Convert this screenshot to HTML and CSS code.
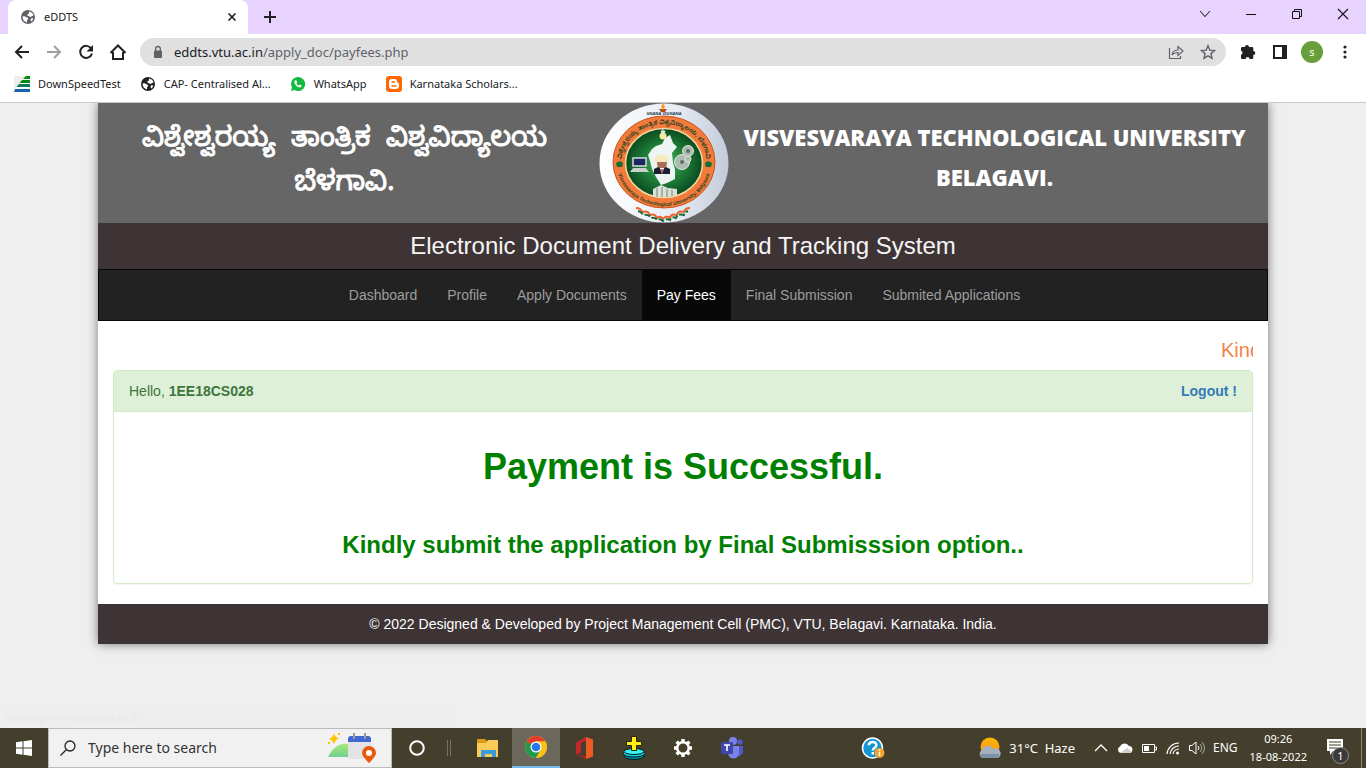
FILE: index.html
```html
<!DOCTYPE html>
<html lang="en">
<head>
<meta charset="utf-8">
<title>eDDTS</title>
<link rel="stylesheet" href="styles.css">
</head>
<body>
<svg class="defs" width="0" height="0" aria-hidden="true">
  <symbol id="globe" viewBox="0 0 16 16"><circle cx="8" cy="8" r="7" fill="currentColor"/><path d="M9 2.600c2.300.3 3.900 1.800 4.500 3.600-.7.900-1.700.6-2.300 1.300-.5.700-1.700.4-2.100-.3-.5-.8-1.900-.2-1.900-1.300 0-1 1.600-.8 1.900-1.700.2-.600-.4-1-.1-1.600z" fill="#fff"/><path d="M2.600 7.600c1.200-.5 2.800-.2 3.600.5.700.7 1.900.5 2 1.500.1.900-1 1.200-1.200 2-.100.600.3 1.200-.2 1.800C4.300 12.900 2.500 10.700 2.600 7.600z" fill="#fff"/><path d="M11.300 9.200l1.900.200c-.2 1.300-1 2.300-2 3-.6-.8-.9-2.400.1-3.200z" fill="#fff"/></symbol>
</svg>

<header class="browser">
  <div class="tabstrip">
    <div class="tab">
      <svg class="i16 muted"><use href="#globe"/></svg>
      <span class="tab-title">eDDTS</span>
      <button class="icon-btn" aria-label="Close tab"><svg class="i16" viewBox="0 0 16 16"><path d="M4.500 4.500l7 7M11.500 4.500l-7 7" stroke="#202124" stroke-width="1.700"/></svg></button>
    </div>
    <button class="icon-btn new-tab" aria-label="New tab"><svg class="i16" viewBox="0 0 16 16"><path d="M8 2v12M2 8h12" stroke="#202124" stroke-width="2"/></svg></button>
    <div class="window-controls">
      <button class="icon-btn" aria-label="Search tabs"><svg class="i16" viewBox="0 0 16 16"><path d="M3 5l5 5.500L13 5" fill="none" stroke="#333" stroke-width="1.100"/></svg></button>
      <button class="icon-btn" aria-label="Minimize"><svg class="i16" viewBox="0 0 16 16"><path d="M3 8.500h10" stroke="#111"/></svg></button>
      <button class="icon-btn" aria-label="Restore"><svg class="i16" viewBox="0 0 16 16"><path d="M3.500 5.500h7v7h-7zM5.500 5.500v-2h7v7h-2" fill="none" stroke="#111"/></svg></button>
      <button class="icon-btn" aria-label="Close"><svg class="i16" viewBox="0 0 16 16"><path d="M3 3l10 10M13 3L3 13" stroke="#111" stroke-width="1.100"/></svg></button>
    </div>
  </div>

  <div class="toolbar">
    <div class="nav-buttons">
      <button class="icon-btn" aria-label="Back"><svg class="i16" viewBox="0 0 16 16"><path d="M15 8H2.500M8 2L2 8l6 6" fill="none" stroke="#202124" stroke-width="2"/></svg></button>
      <button class="icon-btn" aria-label="Forward"><svg class="i16" viewBox="0 0 16 16"><path d="M1 8h12.500M8 2l6 6-6 6" fill="none" stroke="#a0a0a0" stroke-width="2"/></svg></button>
      <button class="icon-btn" aria-label="Reload"><svg class="i16" viewBox="0 0 16 16"><path d="M13.200 4.500A6 6 0 1 0 14 9.500" fill="none" stroke="#202124" stroke-width="2"/><path d="M15 1v6.500H8.500z" fill="#202124"/></svg></button>
      <button class="icon-btn" aria-label="Home"><svg class="i16" viewBox="0 0 16 16"><path d="M3 8v7h10V8M.5 9L8 1.500 15.500 9" fill="none" stroke="#202124" stroke-width="2"/></svg></button>
    </div>
    <div class="omnibox">
      <svg class="i16" viewBox="0 0 16 16"><rect x="4" y="6.500" width="8" height="7.500" rx="1" fill="#5f6368"/><path d="M5.700 7V4.800a2.300 2.300 0 0 1 4.600 0V7" fill="none" stroke="#5f6368" stroke-width="1.300"/></svg>
      <a class="url" href="#">eddts.vtu.ac.in<span class="url-path">/apply_doc/payfees.php</span></a>
      <button class="icon-btn" aria-label="Share"><svg class="i16" viewBox="0 0 16 16"><path d="M1.500 4v10.500h11V12M4 11c.5-3.500 2.500-5 6-5V2.500l5 4.500-5 4.500V8.500C7.500 8.500 5.500 9 4 11z" fill="none" stroke="#5f6368" stroke-width="1.200"/></svg></button>
      <button class="icon-btn" aria-label="Bookmark this tab"><svg class="i16" viewBox="0 0 16 16"><path d="M8 1.800l1.800 4.300 4.700.4-3.600 3.100 1.100 4.600L8 11.800l-4 2.400 1.100-4.600-3.600-3.100 4.700-.4z" fill="none" stroke="#5f6368" stroke-width="1.400"/></svg></button>
    </div>
    <div class="toolbar-right">
      <button class="icon-btn" aria-label="Extensions"><svg class="i16" viewBox="0 0 16 16"><path d="M5 3a2 2 0 0 1 4 0h3q1.300 0 1.300 1.300V7a2 2 0 0 1 0 4v2.700Q13.300 15 12 15H9.500a1.900 1.900 0 0 0-3.800 0H2.300Q1 15 1 13.700v-3a2 2 0 0 0 0-3.900V4.300Q1 3 2.300 3z" fill="#202124"/></svg></button>
      <button class="icon-btn" aria-label="Side panel"><svg class="i16" viewBox="0 0 16 16"><path d="M1 1h14v14H1zM3 3v10h7V3z" fill="#202124" fill-rule="evenodd"/></svg></button>
      <button class="avatar" aria-label="Profile">s</button>
      <button class="icon-btn" aria-label="Menu"><svg class="i16" viewBox="0 0 16 16" fill="#202124"><circle cx="8" cy="3" r="1.600"/><circle cx="8" cy="8" r="1.600"/><circle cx="8" cy="13" r="1.600"/></svg></button>
    </div>
  </div>

  <nav class="bookmarks" aria-label="Bookmarks">
    <a href="#"><svg class="i16" viewBox="0 0 16 16"><path d="M0 0h13L0 14z" fill="#eee"/><path d="M12 0h4v3H9z M8 4h8v3H5.500z" fill="#078a12"/><path d="M5 8h11v3H2.500z" fill="#147957"/><path d="M1 13h15v3H0z" fill="#1765ad"/></svg>DownSpeedTest</a>
    <a href="#"><svg class="i16"><use href="#globe"/></svg>CAP- Centralised Al...</a>
    <a href="#"><svg class="i16" viewBox="0 0 16 16"><path d="M8 1a7 7 0 1 1-3.300 13.100L1 15l1-3.500A7 7 0 0 1 8 1z" fill="#12b93f"/><path d="M5.300 4.300l1.200.1.700 1.900-.8 1c.6 1.200 1.300 1.800 2.400 2.300l.9-1 1.900.9c0 1.400-1 2.100-2.200 1.900-2.600-.5-4.700-2.700-5.100-4.800-.1-1 .3-1.900 1-2.300z" fill="#fff"/></svg>WhatsApp</a>
    <a href="#"><svg class="i16" viewBox="0 0 16 16"><rect width="16" height="16" rx="3" fill="#f60"/><path d="M6 3h2.500a2.500 2.500 0 0 1 2.500 2.500c0 1 .4 1.200 1.200 1.300.6.100.8.300.8.900V10a3 3 0 0 1-3 3H6a3 3 0 0 1-3-3V6a3 3 0 0 1 3-3z" fill="#fff"/><path d="M6 6h2.300M6 10h4" stroke="#f60" stroke-width="1.400" stroke-linecap="round"/></svg>Karnataka Scholars...</a>
  </nav>
</header>

<main class="viewport">
  <div class="site">
    <div class="banner">
      <p class="title-kn" lang="kn">ವಿಶ್ವೇಶ್ವರಯ್ಯ&nbsp; ತಾಂತ್ರಿಕ&nbsp; ವಿಶ್ವವಿದ್ಯಾಲಯ<br>ಬೆಳಗಾವಿ.</p>
      <svg class="seal" viewBox="0 0 130 120" role="img" aria-label="University seal">
        <defs>
          <radialGradient id="sealGreen"><stop offset="0" stop-color="#4db866"/><stop offset=".55" stop-color="#1f7d38"/><stop offset="1" stop-color="#0a4b20"/></radialGradient>
          <linearGradient id="sealRim" x2="1"><stop offset="0" stop-color="#fff"/><stop offset=".6" stop-color="#e6ebf4"/><stop offset="1" stop-color="#c3cbd9"/></linearGradient>
          <path id="arcTop" d="M22.500 59A42.500 38 0 0 1 107.500 59"/>
          <path id="arcBottom" d="M18 61A47 42 0 0 0 112 61"/>
        </defs>
        <ellipse cx="65" cy="60" rx="64.500" ry="59.500" fill="url(#sealRim)"/>
        <ellipse cx="65" cy="59" rx="51" ry="46" fill="#f27a3a" stroke="#c95721"/>
        <ellipse cx="65" cy="60" rx="38.500" ry="34.500" fill="url(#sealGreen)" stroke="#f3d9a4" stroke-width="1.500"/>
        <text class="seal-kn" lang="kn"><textPath href="#arcTop" startOffset="50%" text-anchor="middle">ವಿಶ್ವೇಶ್ವರಯ್ಯ ತಾಂತ್ರಿಕ ವಿಶ್ವವಿದ್ಯಾಲಯ, ಬೆಳಗಾವಿ</textPath></text>
        <text class="seal-en"><textPath href="#arcBottom" startOffset="50%" text-anchor="middle">Visvesvaraya Technological University, Belgaum</textPath></text>
        <path d="M17 60l4-2 3 2-1 4h-5zM106 60l3-2 4 2-1 4h-5z" fill="#0c7130"/>
        <path d="M60 6h8l-2 3h-4z" fill="#ad4b23"/><path d="M64 0l2 4-2 3-2-3z" fill="#ff9b20"/>
        <text class="seal-motto" x="65" y="12" text-anchor="middle">GNANA VIGNANA</text>
        <path d="M71 32l3 8 4 4-5 6 1 10 2 6v10l-8 4-6 2-5-8-4-8-2-8-2-6 4-6 4-3 6-2 3-6z" fill="#edf5f2"/>
        <circle cx="64" cy="33" r="3.500" fill="#f8e99a"/><path d="M62 28h4l-1 3h-2zM64 25v4" stroke="#ddd" fill="#e8f0b0"/>
        <ellipse cx="63" cy="60" rx="5" ry="7" fill="#a96e58"/><path d="M55 58c0-8 15-8 15-1l-3 2h-9z" fill="#f7e9bf"/><path d="M55 71v-5l4-2 4 3 4-3 4 2v5z" fill="#182033"/><path d="M61 65h4l-2 6z" fill="#fff"/><path d="M63 66v4" stroke="#d02c24" stroke-width="1.500"/>
        <path d="M34 55h13v8H34z" fill="#192763" stroke="#d8dce2" stroke-width="1.500"/><path d="M34 65h13l3 4H31z" fill="#c9d2cf"/>
        <g fill="#adbbb1" stroke="#e0e5dd"><circle cx="83" cy="59" r="7.500"/><circle cx="89" cy="48" r="5.500"/><circle cx="89" cy="56" r="3"/></g><circle cx="83" cy="59" r="2" fill="#58735f"/><circle cx="89" cy="48" r="2" fill="#58735f"/>
        <path d="M54 94v-8l8-4 7 3 9 1v6l-9 2z" fill="#dce1d8"/><path d="M58 85v9M63 84v10M68 86v8M73 87v6" stroke="#718779"/>
        <g fill="none" stroke-width="2">
          <path d="M37 105q5 0 6 4 6-2 8 3 5-2 7 3 3-3 6 1 3-4 7-1 1-5 7-3 1-5 7-3 1-4 6-4" stroke="#e9622f"/>
          <path d="M39 108q4 1 5 4 6-1 8 3 4-1 6 2 3-2 6 1 4-3 7-1 2-4 6-2 2-5 8-3 1-3 4-4" stroke="#176d38" stroke-dasharray="6 2"/>
        </g>
      </svg>
      <p class="title-en">VISVESVARAYA TECHNOLOGICAL UNIVERSITY<br>BELAGAVI.</p>
    </div>
    <h1 class="system-title">Electronic Document Delivery and Tracking System</h1>
    <nav class="site-nav" aria-label="Main">
      <a href="#">Dashboard</a>
      <a href="#">Profile</a>
      <a href="#">Apply Documents</a>
      <a href="#" class="active" aria-current="page">Pay Fees</a>
      <a href="#">Final Submission</a>
      <a href="#">Submited Applications</a>
    </nav>
    <div class="content">
      <div class="ticker">Kind</div>
      <section class="panel">
        <div class="panel-heading">
          <span>Hello, <b>1EE18CS028</b></span>
          <a href="#">Logout !</a>
        </div>
        <div class="panel-body">
          <h2>Payment is Successful.</h2>
          <h3>Kindly submit the application by Final Submisssion option..</h3>
        </div>
      </section>
    </div>
    <footer class="site-footer">© 2022 Designed &amp; Developed by Project Management Cell (PMC), VTU, Belagavi. Karnataka. India.</footer>
  </div>
  <div class="status-bubble">Waiting for eddts.vtu.ac.in...</div>
</main>

<footer class="taskbar">
  <button class="task start" aria-label="Start"><svg class="i16" viewBox="0 0 16 16"><path d="M0 2.300l6.500-1v6.200H0zM7.500 1.200L16 0v7.500H7.500zM0 8.500h6.500v6.200L0 13.800zM7.500 8.500H16V16l-8.500-1.200z" fill="#fff"/></svg></button>
  <label class="search">
    <svg class="i16" viewBox="0 0 16 16"><circle cx="10" cy="6" r="5" fill="none" stroke="#222" stroke-width="1.300"/><path d="M6.500 9.500L.5 15.500" stroke="#222" stroke-width="1.300"/></svg>
    <input type="text" placeholder="Type here to search" aria-label="Search">
    <svg class="search-art" viewBox="0 0 50 32"><defs><linearGradient id="hill" y2="1" x2="0"><stop stop-color="#a7e878"/><stop offset="1" stop-color="#73cf91"/></linearGradient></defs><path d="M1 25c5-11 15-17 25-11v11z" fill="url(#hill)"/><rect x="21" y="6" width="23" height="21" rx="3" fill="#e2e3e5"/><path d="M21 10V7q0-3 3-3h17q3 0 3 3v3z" fill="#4168d5"/><path d="M27 1v6M38 1v6" stroke="#999" stroke-width="2"/><path d="M7 2l2 3 3 1.500-3 1.500-2 4-2-3.500L2 7l3-2z" fill="#ffc400"/><path d="M11 1h2v2h-2zM1 10h2v2H1z" fill="#ffc400"/><path d="M42 31s-7-6.500-7-10a7 7 0 0 1 14 0c0 3.500-7 10-7 10z" fill="#e8590c"/><circle cx="42" cy="21" r="3" fill="#fff"/></svg>
  </label>
  <button class="task" aria-label="Cortana"><svg class="i16" viewBox="0 0 16 16"><circle cx="8" cy="8" r="6.800" fill="none" stroke="#fff" stroke-width="2"/></svg></button>
  <span class="divider"></span>
  <button class="task" aria-label="File Explorer"><svg class="i24" viewBox="0 0 24 24"><path d="M1 4q0-1 1-1h7l2 2h11v16H1z" fill="#d99a16"/><path d="M1 7h9l2-3h10v17H1z" fill="#fbcb5a"/><path d="M5 21v-7h15v7h-4v-3H9v3z" fill="#3b9bd9"/></svg></button>
  <button class="task active" aria-label="Chrome"><svg class="i24" viewBox="0 0 24 24"><circle cx="12" cy="12" r="11" fill="#fbc116"/><path d="M12 12L2.500 6.500A11 11 0 0 1 21.500 6.500H12z" fill="#e33b2e"/><path d="M2.500 6.500A11 11 0 0 0 12 23l4.800-8.200L12 12z" fill="#229a4b"/><path d="M12 6.500h9.500A11 11 0 0 1 12 23l4.800-8.200z" fill="#fbc116"/><circle cx="12" cy="12" r="5.500" fill="#fff"/><circle cx="12" cy="12" r="4.300" fill="#2878e8"/></svg></button>
  <button class="task" aria-label="Office"><svg class="i24" viewBox="0 0 24 24"><path d="M3 6.500L13 1v4L8 7v9.500L3 18.500z" fill="#c3272b"/><path d="M13 1l7 2.500v17L13 23z" fill="#ee5a24"/><path d="M3 18.500l10 1.500v3z" fill="#b3202a"/></svg></button>
  <button class="task" aria-label="Downloader"><svg class="i24" viewBox="0 0 24 24"><ellipse cx="12" cy="20" rx="10" ry="3.500" fill="#078d9a" stroke="#001b22"/><ellipse cx="12" cy="17.500" rx="11" ry="3.500" fill="#15d6df" stroke="#001b22"/><ellipse cx="12" cy="15.500" rx="10" ry="3" fill="#3bf2f3" stroke="#001b22"/><path d="M9.500.5h5v5h5v4h-5v5h-5v-5h-5v-4h5z" fill="#ffed16" stroke="#2b2500"/></svg></button>
  <button class="task" aria-label="Settings"><svg class="i24" viewBox="0 0 24 24"><circle cx="12" cy="12" r="5.800" fill="none" stroke="#fff" stroke-width="2.600"/><path d="M12 3v3M12 18v3M3 12h3M18 12h3M5.600 5.600l2.200 2.200M16.200 16.200l2.200 2.200M18.400 5.600l-2.200 2.200M7.800 16.200l-2.200 2.200" stroke="#fff" stroke-width="3.400"/></svg></button>
  <button class="task" aria-label="Teams"><svg class="i24" viewBox="0 0 24 24"><circle cx="13" cy="5" r="4" fill="#7b83eb"/><circle cx="20" cy="6" r="2.800" fill="#5059c9"/><path d="M15 10h8v6a5 5 0 0 1-6 4z" fill="#5059c9"/><path d="M8 10h11v7a5.500 5.500 0 0 1-11 0z" fill="#7b83eb"/><rect x="1" y="6" width="12" height="12" rx="1" fill="#4047ac"/><path d="M4 9h6M7 9v6" stroke="#fff" stroke-width="1.600"/></svg></button>
  <button class="task help" aria-label="Get help"><svg class="i24" viewBox="0 0 24 24"><circle cx="11.500" cy="12" r="10" fill="#1296d5" stroke="#fff" stroke-width="1.500"/><path d="M7.800 9.300c.2-4.500 7.600-4.300 7.600-.3 0 2.800-3.600 2.500-3.600 5.500M11.800 16v2.500" fill="none" stroke="#fff" stroke-width="2.500"/><circle cx="18.500" cy="17" r="5" fill="#f4a426"/><path d="M18.500 16v4M18.500 13.500v1.500" stroke="#fff" stroke-width="1.500"/></svg></button>
  <div class="tray">
    <svg class="i24" viewBox="0 0 24 24"><defs><linearGradient id="sun" x2="0" y2="1"><stop stop-color="#ffb900"/><stop offset="1" stop-color="#f78b1f"/></linearGradient></defs><circle cx="13" cy="11" r="9.500" fill="url(#sun)"/><path d="M5 22a4.500 4.500 0 0 1 0-8 6 6 0 0 1 11-1 5 5 0 0 1 5 9z" fill="#a4b0bd"/><path d="M3 18h19v2q-1 2-3 2H5q-2-1-2-4z" fill="#7c91a8"/></svg>
    <span class="weather">31°C&nbsp; Haze</span>
    <svg class="i16" viewBox="0 0 16 16"><path d="M2 11l6-6 6 6" fill="none" stroke="#fff" stroke-width="1.400"/></svg>
    <svg class="i16" viewBox="0 0 16 16"><path d="M3.500 13a3.500 3.500 0 0 1-.5-6.500A5 5 0 0 1 12 6a3.600 3.600 0 0 1 1 7z" fill="#fff"/><path d="M3 13l7-5 5 4-2 1z" fill="#cfcfc9"/></svg>
    <svg class="i16" viewBox="0 0 16 16"><path d="M1.500 4.500h12v8h-12zM14 7h1.500v3H14" fill="none" stroke="#fff"/><path d="M3 6h5v5H3z" fill="#fff"/></svg>
    <svg class="i16" viewBox="0 0 16 16"><g fill="none" stroke="#fff" stroke-width="1.200"><path d="M2 14A12 12 0 0 1 14 3M5 14a9 9 0 0 1 9-8M8 14a6 6 0 0 1 6-5"/></g><circle cx="12.500" cy="13" r="1.500" fill="#fff"/></svg>
    <svg class="i16" viewBox="0 0 16 16"><path d="M.5 5.500H3l4-3.500v12L3 10.500H.5zM9 6q2 2 0 4" fill="none" stroke="#fff"/><path d="M11 4q3.500 4 0 8M13 2q5 6 0 12" fill="none" stroke="#aaa89c"/></svg>
    <span class="lang">ENG</span>
    <time class="clock">09:26<br>18-08-2022</time>
    <button class="task notify" aria-label="1 notification"><svg class="i24" viewBox="0 0 24 24"><path d="M1 3h16v12H7l-3 4v-4H1z" fill="#fff"/><path d="M3 6h12M3 9h12M3 12h8" stroke="#443e2c" stroke-width="1.200"/></svg><span class="badge">1</span></button>
  </div>
</footer>
</body>
</html>
```
FILE: styles.css
```css
* { box-sizing: border-box; }
body {
  margin: 0;
  height: 100vh;
  display: flex;
  flex-direction: column;
  overflow: hidden;
  font-family: "Liberation Sans", Arial, sans-serif;
  font-size: 14px;
  line-height: 20px;
}
a { text-decoration: none; color: inherit; }
p, h1, h2, h3 { margin: 0; }
button { border: 0; padding: 0; background: none; font: inherit; color: inherit; }
svg { display: block; flex: none; }
.defs { position: absolute; }
.i16 { width: 16px; height: 16px; }
.i24 { width: 24px; height: 24px; }
.icon-btn { flex: none; width: 16px; height: 16px; }
.muted { color: #5f6368; }

/* Browser window */
.browser {
  flex: none;
  background: #fff;
  border-bottom: 1px solid #c8c8c8;
  color: #202124;
  font-family: "Noto Sans", "Open Sans", sans-serif;
  font-size: 11px;
}
.tabstrip {
  display: flex;
  align-items: center;
  height: 34px;
  padding-left: 8px;
  background: #e8d3ff;
}
.tab {
  display: flex;
  align-items: center;
  gap: 8px;
  width: 240px;
  height: 34px;
  padding: 0 8px 0 12px;
  border-radius: 8px 8px 0 0;
  background: #fff;
}
.tab-title { flex: 1; }
.new-tab { margin-left: 14px; }
.window-controls { display: flex; gap: 30px; margin-left: auto; padding: 0 15px 6px 0; }
.toolbar {
  display: flex;
  align-items: center;
  height: 36px;
  gap: 14px;
  padding: 0 13px 0 14px;
}
.nav-buttons { display: flex; gap: 16px; }
.omnibox {
  flex: 1;
  display: flex;
  align-items: center;
  gap: 16px;
  height: 28px;
  padding: 0 10px;
  border-radius: 14px;
  background: #e0e0e0;
}
.url { flex: 1; margin-left: -8px; font-size: 13px; }
.url-path { color: #5f6368; }
.toolbar-right { display: flex; align-items: center; gap: 16px; }
.toolbar-right .icon-btn:last-child { margin-left: -2px; }
.avatar {
  width: 22px;
  height: 22px;
  margin-left: -3px;
  border-radius: 50%;
  background: #689f38;
  color: #fff;
  line-height: 20px;
}
.bookmarks {
  display: flex;
  align-items: center;
  gap: 19px;
  height: 32px;
  padding: 0 14px 4px;
}
.bookmarks a { display: flex; align-items: center; gap: 8px; }

/* Site */
.viewport { position: relative; flex: 1; min-height: 0; overflow: hidden; background: #efefef; }
.site {
  max-width: 1170px;
  margin: 0 auto;
  background: #fff;
  box-shadow: 0 0 10px #777;
}
.banner {
  display: grid;
  grid-template-columns: 501fr 130px 539fr;
  height: 120px;
  background: #666;
  color: #fff;
  text-align: center;
  white-space: nowrap;
}
.title-kn {
  padding: 18px 8px 0 0;
  font-family: "Noto Sans Kannada", "Noto Sans", sans-serif;
  font-size: 27px;
  line-height: 44px;
  -webkit-text-stroke: 1px #fff;
}
.title-en { padding: 14px 8px 0 0; font-family: "Open Sans", sans-serif; font-size: 22px; line-height: 40px; font-weight: 800; }
.seal { width: 130px; height: 120px; }
.seal-kn { font-family: "Noto Sans Kannada", sans-serif; font-size: 6px; font-weight: 700; fill: #354523; }
.seal-en { font-family: "Noto Sans", sans-serif; font-size: 5px; font-weight: 700; fill: #354523; }
.seal-motto { font-family: "Noto Sans", sans-serif; font-size: 4px; font-weight: 700; fill: #223c4b; }
.system-title {
  padding: 10px 0;
  background: #3e3435;
  color: #f5f5f5;
  font-size: 24px;
  line-height: 26px;
  font-weight: 400;
  text-align: center;
}
.site-nav {
  display: flex;
  justify-content: center;
  padding-left: 3px;
  border: 1px solid #080808;
  background: #222;
  color: #9d9d9d;
}
.site-nav a { padding: 15px; }
.site-nav .active { background: #080808; color: #fff; }
.content { padding: 15px 15px 20px; }
.ticker {
  padding: 0 0 6px calc(100% - 32px);
  overflow: hidden;
  color: #f0834a;
  font-size: 20px;
  line-height: 28px;
}
.panel {
  border: 1px solid #d6e9c6;
  border-radius: 4px;
  box-shadow: 0 1px 1px rgba(0, 0, 0, .05);
}
.panel-heading {
  display: flex;
  justify-content: space-between;
  padding: 10px 15px;
  border-bottom: 1px solid #d6e9c6;
  background: #dff0d8;
  color: #3c763d;
}
.panel-heading a { color: #337ab7; font-weight: 700; }
.panel-body { padding: 35px 15px 25px; color: #008000; text-align: center; }
.panel-body h2 { font-size: 36px; line-height: 40px; }
.panel-body h3 { margin-top: 45px; font-size: 24px; line-height: 26px; }
.site-footer { padding: 10px; background: #3e3435; color: #fff; text-align: center; }
.status-bubble {
  position: absolute;
  left: 0;
  bottom: 0;
  width: 33%;
  padding: 0 6px;
  background: #eee;
  color: #e9e9e9;
  font-family: "Noto Sans", sans-serif;
  font-size: 11px;
}

/* Windows taskbar */
.taskbar {
  flex: none;
  display: flex;
  align-items: center;
  height: 40px;
  background: #443e2c;
  color: #fff;
  font-family: "Noto Sans", "Open Sans", sans-serif;
}
.task { flex: none; display: grid; place-items: center; width: 49px; height: 40px; }
.task.start { width: 48px; }
.task.active { width: 48px; background: #6b685b; border-bottom: 2px solid #76b9ed; }
.divider { width: 4px; height: 16px; margin: 0 12px 0 6px; border: solid #77725f; border-width: 0 1px; }
.search {
  display: flex;
  align-items: center;
  gap: 12px;
  width: 344px;
  height: 40px;
  padding: 0 14px 0 11px;
  border: 1px solid #bbb;
  background: #f1f1f1;
}
.search input { flex: 1; min-width: 0; padding: 0; border: 0; background: none; color: #333; font: inherit; }
.search input::placeholder { color: #333; opacity: 1; }
.search-art { width: 50px; height: 32px; }
.help { margin-left: 92px; }
.tray {
  display: flex;
  align-items: center;
  gap: 8px;
  margin: 0 4px 0 auto;
  border-right: 1px solid #8c8879;
}
.weather { margin: 0 10px 0 0; font-size: 13px; }
.lang { font-size: 12px; }
.clock { margin-left: 4px; font-size: 11px; line-height: 18px; text-align: center; }
.task.notify { position: relative; width: 46px; }
.badge {
  position: absolute;
  right: 12px;
  bottom: 4px;
  width: 17px;
  height: 17px;
  border: 1px solid #8f8f8f;
  border-radius: 50%;
  background: #3a3a3a;
  font-size: 11px;
  line-height: 15px;
}
```
